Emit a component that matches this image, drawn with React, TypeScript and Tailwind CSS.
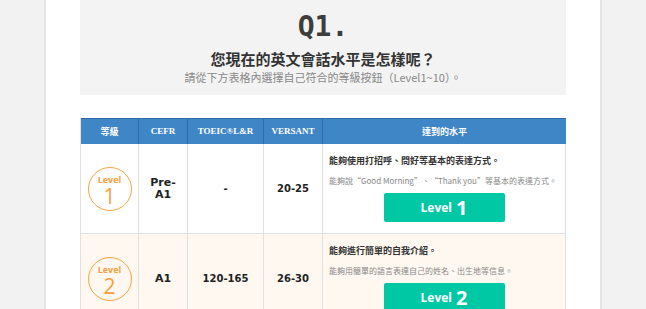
import React from "react";

type Row = {
  level: number;
  cefr: React.ReactNode;
  toeic: string;
  versant: string;
  title: string;
  desc: string;
  bg: string;
};

const rows: Row[] = [
  {
    level: 1,
    cefr: (
      <>
        Pre-
        <br />
        A1
      </>
    ),
    toeic: "-",
    versant: "20-25",
    title: "能夠使用打招呼、問好等基本的表達方式。",
    desc: "能夠說“Good Morning”、“Thank you”等基本的表達方式。",
    bg: "bg-white",
  },
  {
    level: 2,
    cefr: "A1",
    toeic: "120-165",
    versant: "26-30",
    title: "能夠進行簡單的自我介紹。",
    desc: "能夠用簡單的語言表達自己的姓名、出生地等信息。",
    bg: "bg-[#fff8f0]",
  },
];

function Circle({ n }: { n: number }) {
  return (
    <div className="w-[44px] h-[44px] rounded-full border-[1.5px] border-[#f5a445] flex flex-col items-center justify-center pt-[4px] text-[#f5a040] font-['Open_Sans',sans-serif]">
      <span className="text-[9px] font-bold leading-[10px]">Level</span>
      <span className="text-[21px] font-normal leading-[22px]">{n}</span>
    </div>
  );
}

export default function App() {
  return (
    <div className="w-full h-[309px] bg-[#f2f2f2] overflow-hidden">
      <div className="mx-auto w-[558px] h-[309px] bg-white border-x-2 border-[#e4e4e4] px-[34px]">
        <div className="h-[95px] bg-[#f3f3f3] flex flex-col items-center">
          <div className="mt-[12px] text-[28px] leading-[30px] font-bold text-[#3d3d3d] font-['DejaVu_Sans_Mono',monospace]">
            Q1.
          </div>
          <div className="mt-[7px] text-[15px] leading-[20px] font-bold text-[#333] font-['Noto_Sans_CJK_TC',sans-serif]">
            您現在的英文會話水平是怎樣呢？
          </div>
          <div className="mt-[1px] text-[11px] leading-[14px] text-[#888] font-['Noto_Sans_CJK_TC',sans-serif]">
            請從下方表格內選擇自己符合的等級按鈕（Level1~10）。
          </div>
        </div>

        <div className="mt-[23px] border-l border-[#e0e0e0]">
          <div className="grid grid-cols-[58px_49px_76px_59px_1fr] h-[26px] bg-[#3f86c7] border-t border-[#2e6aa6] text-white text-[9px] font-bold">
            <div className="flex items-center justify-center border-r border-[#2f6ca8] font-['Noto_Sans_CJK_TC',sans-serif]">
              等級
            </div>
            <div className="flex items-center justify-center border-r border-[#2f6ca8] font-['Liberation_Serif',serif]">
              CEFR
            </div>
            <div className="flex items-center justify-center border-r border-[#2f6ca8] font-['Liberation_Serif',serif]">
              TOEIC®L&amp;R
            </div>
            <div className="flex items-center justify-center border-r border-[#2f6ca8] font-['Liberation_Serif',serif]">
              VERSANT
            </div>
            <div className="flex items-center justify-center font-['Noto_Sans_CJK_TC',sans-serif]">
              達到的水平
            </div>
          </div>

          {rows.map((r) => (
            <div
              key={r.level}
              className={`grid grid-cols-[58px_49px_76px_59px_1fr] h-[90px] border-b border-[#e0e0e0] ${r.bg}`}
            >
              <div className="flex items-center justify-center border-r border-[#e0e0e0]">
                <Circle n={r.level} />
              </div>
              <div className="flex items-center justify-center text-center border-r border-[#e0e0e0] text-[11px] leading-[12px] font-bold text-[#222] font-['DejaVu_Sans',sans-serif]">
                <div>{r.cefr}</div>
              </div>
              <div className="flex items-center justify-center border-r border-[#e0e0e0] text-[10px] font-bold text-[#222] font-['DejaVu_Sans',sans-serif]">
                {r.toeic}
              </div>
              <div className="flex items-center justify-center border-r border-[#e0e0e0] text-[10px] font-bold text-[#222] font-['DejaVu_Sans',sans-serif]">
                {r.versant}
              </div>
              <div className="flex flex-col pt-[10px] pl-[6px] border-r border-[#e0e0e0] font-['Noto_Sans_CJK_TC',sans-serif]">
                <div className="text-[9px] leading-[14px] font-bold text-[#333]">{r.title}</div>
                <div className="mt-[6px] text-[8px] leading-[14px] text-[#888]">{r.desc}</div>
                <div className="mt-[5px] self-center mr-[6px] w-[121px] h-[29px] rounded-[2px] bg-[#00c8a5] flex items-center justify-center gap-[4px] text-white font-bold font-['Open_Sans',sans-serif]">
                  <span className="text-[12px] leading-none">Level</span>
                  <span className="text-[20px] leading-none">{r.level}</span>
                </div>
              </div>
            </div>
          ))}
        </div>
      </div>
    </div>
  );
}
